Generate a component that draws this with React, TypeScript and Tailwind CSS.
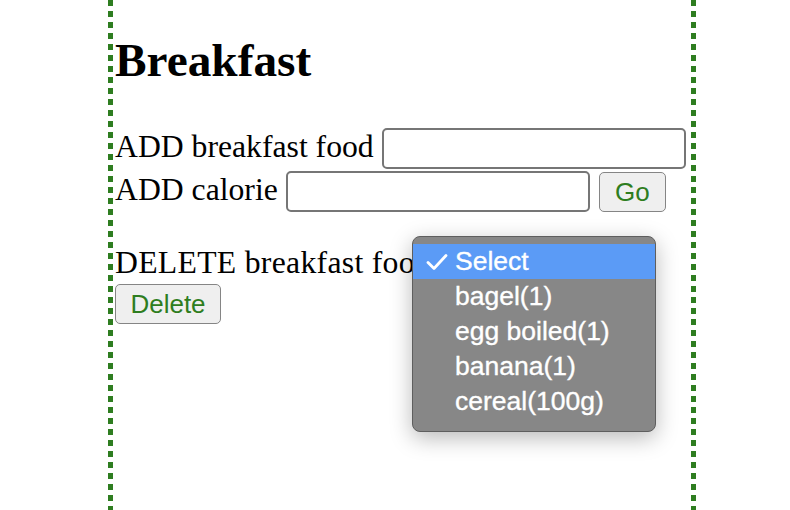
const serif = { fontFamily: '"Liberation Serif", "Times New Roman", serif' };
const sans = { fontFamily: '"Liberation Sans", Arial, sans-serif' };

const options = ["Select", "bagel(1)", "egg boiled(1)", "banana(1)", "cereal(100g)"];

function Stripe() {
  return (
    <div className="w-[5px] shrink-0 self-stretch bg-[repeating-linear-gradient(to_bottom,#2e7d20_0px,#2e7d20_6px,transparent_6px,transparent_11px)]" />
  );
}

function TextBox({ width }: { width: string }) {
  return (
    <input
      type="text"
      className={`${width} h-[41px] rounded-[5px] border-2 border-[#767676] bg-white outline-none`}
    />
  );
}

function GreenButton({ label, width }: { label: string; width: string }) {
  return (
    <button
      className={`${width} h-[40px] rounded-[5px] border-[1.5px] border-[#858585] bg-[#efefef] text-[26px] leading-none text-[#2e7d20]`}
      style={sans}
    >
      {label}
    </button>
  );
}

export default function App() {
  return (
    <div className="h-[510px] w-[790px] overflow-hidden bg-white text-black">
      <div className="ml-[108px] flex h-full w-[588px]">
        <Stripe />

        <div className="relative flex-1 pl-[2px] text-[31.7px] leading-[36px]" style={serif}>
          <h1 className="mt-[33px] text-[47.3px] font-bold leading-[54px]">Breakfast</h1>

          {/* add food */}
          <div className="mt-[41px] flex items-end">
            <span className="mb-[4px] whitespace-nowrap">ADD breakfast food</span>
            <div className="ml-[8px]">
              <TextBox width="w-[304px]" />
            </div>
          </div>
          <div className="mt-[2px] flex items-end">
            <span className="mb-[4px] whitespace-nowrap">ADD calorie</span>
            <div className="ml-[8px]">
              <TextBox width="w-[304px]" />
            </div>
            <div className="ml-[9px]">
              <GreenButton label="Go" width="w-[67px]" />
            </div>
          </div>

          {/* delete food */}
          <div className="mt-[33px] whitespace-nowrap tracking-[0.3px]">DELETE breakfast food</div>
          <div className="mt-[3px]">
            <GreenButton label="Delete" width="w-[106px]" />
          </div>

          {/* open native select menu */}
          <div
            className="absolute left-[299px] top-[236px] w-[244px] rounded-[8px] border border-[#5e5e5e] bg-[#878787] pb-[12px] pt-[7px] shadow-[0_6px_22px_rgba(0,0,0,0.28)]"
            style={sans}
          >
            {options.map((o, i) => (
              <div
                key={o}
                className={`flex h-[35px] items-center text-[26.5px] leading-none text-white [-webkit-text-stroke:0.35px_white] ${
                  i === 0 ? "bg-[#5b9bf6]" : ""
                }`}
              >
                <div className="flex w-[42px] justify-center pl-[5px]">
                  {i === 0 && (
                    <svg width="22" height="18" viewBox="0 0 22 18" fill="none">
                      <path d="M2 9.5 L8 15.5 L20 2.5" stroke="white" strokeWidth="2.8" strokeLinecap="round" strokeLinejoin="round" />
                    </svg>
                  )}
                </div>
                <span>{o}</span>
              </div>
            ))}
          </div>
        </div>

        <Stripe />
      </div>
    </div>
  );
}
